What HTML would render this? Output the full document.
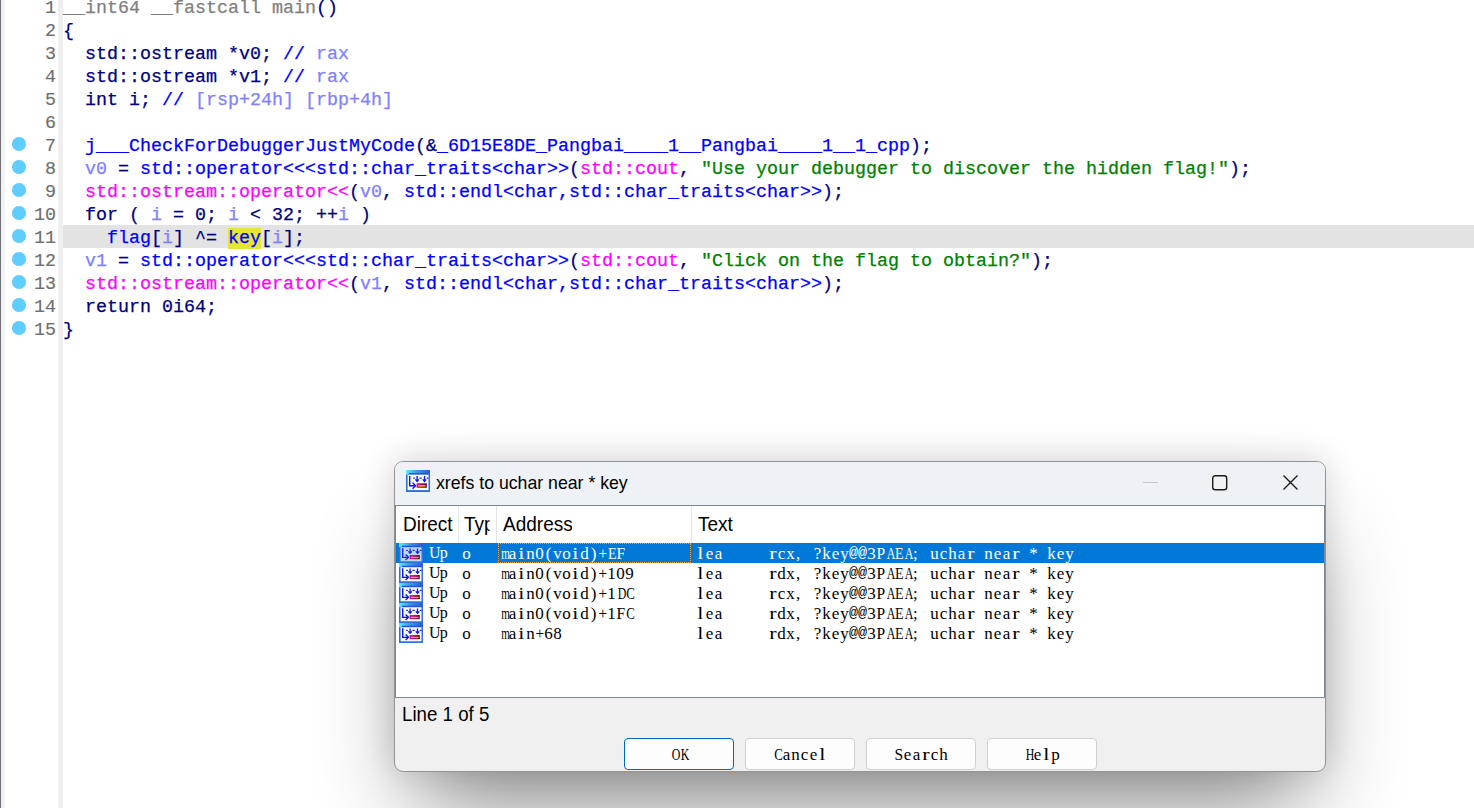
<!DOCTYPE html>
<html><head><meta charset="utf-8">
<style>
*{margin:0;padding:0;box-sizing:border-box}
html,body{width:1474px;height:808px;overflow:hidden;background:#fff;position:relative}
.abs{position:absolute}
.lb{position:absolute;left:0;top:0;width:1px;height:808px;background:#6e7278}
.lb2{position:absolute;left:1px;top:0;width:4px;height:808px;background:#f3f3f3}
.gut{position:absolute;left:58px;top:0;width:5px;height:808px;background:#efefef}
.ln{position:absolute;left:0;width:56px;text-align:right;font-family:"Liberation Mono",monospace;font-size:18.333px;line-height:23px;color:#6e6e6e;white-space:pre;-webkit-text-stroke:0.15px currentColor}
.cl{position:absolute;left:63px;font-family:"Liberation Mono",monospace;font-size:18.333px;line-height:23px;color:#000080;white-space:pre;-webkit-text-stroke:0.25px currentColor}
.dot{position:absolute;left:12.3px;width:13.6px;height:13.6px;border-radius:50%;background:#5fcdfd}
.hl{position:absolute;left:63px;top:225px;width:1411px;height:23px;background:#e3e3e3}
.n{color:#000080} .b{color:#0000ff} .p{color:#8080ff} .m{color:#ff00ff} .s{color:#008000} .gr{color:#808080}
.k{color:#0000ff;background:#e5e536}
.dlg{position:absolute;left:394px;top:461px;width:932px;height:311px;border:1px solid #939393;border-radius:9px;background:#f0f0f0;box-shadow:0 -4px 32px rgba(0,0,0,0.14),0 56px 96px -22px rgba(0,0,0,0.46)}
.title{position:absolute;left:395px;top:462px;width:930px;height:43px;background:#eef2f6;border-radius:8px 8px 0 0}
.ttxt{position:absolute;left:436px;top:472px;font-family:"Liberation Sans",sans-serif;font-size:17.7px;line-height:22px;color:#000;white-space:pre}
.list{position:absolute;left:395px;top:505px;width:930px;height:193px;background:#fff;border:1px solid #80868e}
.hdr{position:absolute;top:513px;font-family:"Liberation Sans",sans-serif;font-size:20px;line-height:22px;transform:scaleX(0.95);transform-origin:0 0;color:#000;white-space:nowrap;overflow:hidden}
.sep{position:absolute;top:506px;width:1px;height:37px;background:#e5e5e5}
.rt{position:absolute;font-family:"Liberation Serif",serif;font-size:17px;line-height:21px;color:#000;white-space:nowrap}
.rt i,.btn i{display:inline-block;font-style:normal;text-align:center;vertical-align:top}
.rt b,.btn b{display:inline-block;font-weight:normal}
.status{position:absolute;left:402px;top:703px;font-family:"Liberation Sans",sans-serif;font-size:20px;transform:scaleX(0.935);transform-origin:0 0;line-height:22px;color:#000;white-space:pre}
.btn{position:absolute;top:738px;width:110px;height:32px;border:1px solid #d0d0d0;border-radius:4px;background:#fdfdfd;font-family:"Liberation Serif",serif;font-size:17px;line-height:31px;text-align:center;color:#000;white-space:nowrap}
.btn.def{border:1.5px solid #0067c0}
</style></head><body>
<div class="lb"></div><div class="lb2"></div><div class="gut"></div>
<div class="hl"></div>
<div class="ln" style="top:-3px">1</div>
<div class="cl" style="top:-3px"><span class="gr">__int64 __fastcall main</span><span class="n">()</span></div>
<div class="ln" style="top:20px">2</div>
<div class="cl" style="top:20px"><span class="n">{</span></div>
<div class="ln" style="top:43px">3</div>
<div class="cl" style="top:43px"><span class="n">  std::ostream *v0; </span><span class="b">//</span><span class="p"> rax</span></div>
<div class="ln" style="top:66px">4</div>
<div class="cl" style="top:66px"><span class="n">  std::ostream *v1; </span><span class="b">//</span><span class="p"> rax</span></div>
<div class="ln" style="top:89px">5</div>
<div class="cl" style="top:89px"><span class="n">  int i; </span><span class="b">//</span><span class="p"> [rsp+24h] [rbp+4h]</span></div>
<div class="ln" style="top:112px">6</div>
<div class="cl" style="top:112px"></div>
<div class="ln" style="top:135px">7</div>
<div class="dot" style="top:137px"></div>
<div class="cl" style="top:135px"><span class="n">  </span><span class="b">j___CheckForDebuggerJustMyCode</span><span class="n">(&amp;</span><span class="b">_6D15E8DE_Pangbai____1__Pangbai____1__1_cpp</span><span class="n">);</span></div>
<div class="ln" style="top:158px">8</div>
<div class="dot" style="top:160px"></div>
<div class="cl" style="top:158px"><span class="n">  </span><span class="p">v0</span><span class="n"> = </span><span class="b">std::operator&lt;&lt;&lt;std::char_traits&lt;char&gt;&gt;</span><span class="n">(</span><span class="m">std::cout</span><span class="n">, </span><span class="s">"Use your debugger to discover the hidden flag!"</span><span class="n">);</span></div>
<div class="ln" style="top:181px">9</div>
<div class="dot" style="top:183px"></div>
<div class="cl" style="top:181px"><span class="n">  </span><span class="m">std::ostream::operator&lt;&lt;</span><span class="n">(</span><span class="p">v0</span><span class="n">, </span><span class="b">std::endl&lt;char,std::char_traits&lt;char&gt;&gt;</span><span class="n">);</span></div>
<div class="ln" style="top:204px">10</div>
<div class="dot" style="top:206px"></div>
<div class="cl" style="top:204px"><span class="n">  for ( </span><span class="p">i</span><span class="n"> = 0; </span><span class="p">i</span><span class="n"> &lt; 32; ++</span><span class="p">i</span><span class="n"> )</span></div>
<div class="ln" style="top:227px">11</div>
<div class="dot" style="top:229px"></div>
<div class="cl" style="top:227px"><span class="n">    </span><span class="b">flag</span><span class="n">[</span><span class="p">i</span><span class="n">] ^= </span><span class="k">key</span><span class="n">[</span><span class="p">i</span><span class="n">];</span></div>
<div class="ln" style="top:250px">12</div>
<div class="dot" style="top:252px"></div>
<div class="cl" style="top:250px"><span class="n">  </span><span class="p">v1</span><span class="n"> = </span><span class="b">std::operator&lt;&lt;&lt;std::char_traits&lt;char&gt;&gt;</span><span class="n">(</span><span class="m">std::cout</span><span class="n">, </span><span class="s">"Click on the flag to obtain?"</span><span class="n">);</span></div>
<div class="ln" style="top:273px">13</div>
<div class="dot" style="top:275px"></div>
<div class="cl" style="top:273px"><span class="n">  </span><span class="m">std::ostream::operator&lt;&lt;</span><span class="n">(</span><span class="p">v1</span><span class="n">, </span><span class="b">std::endl&lt;char,std::char_traits&lt;char&gt;&gt;</span><span class="n">);</span></div>
<div class="ln" style="top:296px">14</div>
<div class="dot" style="top:298px"></div>
<div class="cl" style="top:296px"><span class="n">  return 0i64;</span></div>
<div class="ln" style="top:319px">15</div>
<div class="dot" style="top:321px"></div>
<div class="cl" style="top:319px"><span class="n">}</span></div>
<div class="dlg"></div>
<div class="title"></div>
<svg class="abs" style="left:406px;top:470px" width="24" height="22" viewBox="0 0 24 22" preserveAspectRatio="none">
<defs><linearGradient id="tgt" x1="0" y1="0" x2="1" y2="0"><stop offset="0" stop-color="#5aeeff"/><stop offset="0.45" stop-color="#3a98ea"/><stop offset="1" stop-color="#2a5cd0"/></linearGradient>
<linearGradient id="rgt" x1="0" y1="0" x2="1" y2="0"><stop offset="0" stop-color="#e0108c"/><stop offset="0.5" stop-color="#980a6a"/><stop offset="1" stop-color="#4a0038"/></linearGradient></defs>
<rect x="0" y="0" width="24" height="22" fill="#2f70da"/>
<rect x="0" y="0" width="24" height="4.7" fill="url(#tgt)"/>
<rect x="2.8" y="3" width="19.5" height="1.7" fill="#2456d4"/>
<rect x="1.6" y="4.7" width="20.9" height="15.4" fill="#f4fdff"/>
<path d="M3.7 5.9 V15.7 H9.6" stroke="#1010ff" stroke-width="1.4" fill="none"/>
<path d="M6.6 12.6 L9.4 15.7 L6.6 18.8" stroke="#1010ff" stroke-width="1.4" fill="none"/>
<path d="M7.2 8.1 H8.8 M13.6 8.1 H15.7 M20.8 8.1 H22.5" stroke="#1010ff" stroke-width="1.4" fill="none"/>
<path d="M11.1 6 V11.4 M9.4 9.3 L11.1 11.4 L12.8 9.3 M18.5 6 V11.4 M16.8 9.3 L18.5 11.4 L20.2 9.3" stroke="#1010ff" stroke-width="1.3" fill="none"/>
<rect x="10.6" y="13.3" width="10.2" height="4.5" fill="url(#rgt)"/>
<rect x="12" y="15.1" width="7.6" height="1.5" fill="#ffa22a"/>
</svg>
<div class="ttxt">xrefs to uchar near * key</div>
<svg class="abs" style="left:1140px;top:474px" width="170" height="20" viewBox="0 0 170 20">
 <path d="M3 8.5 H18" stroke="#c5c5c5" stroke-width="1"/>
 <rect x="72.7" y="1.7" width="14" height="14" rx="2.5" fill="none" stroke="#1a1a1a" stroke-width="1.4"/>
 <path d="M143.5 1.5 L157.5 15.5 M157.5 1.5 L143.5 15.5" stroke="#1a1a1a" stroke-width="1.4"/>
</svg>
<div class="list"></div>
<div class="hdr" style="left:403px;width:54px">Direct</div>
<div class="sep" style="left:458px"></div>
<div class="hdr" style="left:464px;width:27px">Type</div>
<div class="sep" style="left:496px"></div>
<div class="hdr" style="left:503px">Address</div>
<div class="sep" style="left:691px"></div>
<div class="hdr" style="left:698px">Text</div>
<div class="abs" style="left:396px;top:543px;width:928px;height:20px;background:#0078d7"></div>
<div class="abs" style="left:498px;top:543px;width:193px;height:20px;border:1px dotted #f0a040"></div>
<svg class="abs" style="left:399px;top:543px" width="24" height="20" viewBox="0 0 24 22" preserveAspectRatio="none">
<defs><linearGradient id="tgr0" x1="0" y1="0" x2="1" y2="0"><stop offset="0" stop-color="#5aeeff"/><stop offset="0.45" stop-color="#3a98ea"/><stop offset="1" stop-color="#2a5cd0"/></linearGradient>
<linearGradient id="rgr0" x1="0" y1="0" x2="1" y2="0"><stop offset="0" stop-color="#e0108c"/><stop offset="0.5" stop-color="#980a6a"/><stop offset="1" stop-color="#4a0038"/></linearGradient></defs>
<rect x="0" y="0" width="24" height="22" fill="#2f70da"/>
<rect x="0" y="0" width="24" height="4.7" fill="url(#tgr0)"/>
<rect x="2.8" y="3" width="19.5" height="1.7" fill="#2456d4"/>
<rect x="1.6" y="4.7" width="20.9" height="15.4" fill="#b6daf2"/>
<path d="M3.7 5.9 V15.7 H9.6" stroke="#1f1ff5" stroke-width="1.4" fill="none"/>
<path d="M6.6 12.6 L9.4 15.7 L6.6 18.8" stroke="#1f1ff5" stroke-width="1.4" fill="none"/>
<path d="M7.2 8.1 H8.8 M13.6 8.1 H15.7 M20.8 8.1 H22.5" stroke="#1f1ff5" stroke-width="1.4" fill="none"/>
<path d="M11.1 6 V11.4 M9.4 9.3 L11.1 11.4 L12.8 9.3 M18.5 6 V11.4 M16.8 9.3 L18.5 11.4 L20.2 9.3" stroke="#1f1ff5" stroke-width="1.3" fill="none"/>
<rect x="10.6" y="13.3" width="10.2" height="4.5" fill="url(#rgr0)"/>
<rect x="12" y="15.1" width="7.6" height="1.5" fill="#d8a050"/>
</svg>
<div class="rt" style="left:429px;top:543px;color:#fff;font-size:16px;letter-spacing:-0.8px;margin-top:-1px">Up</div>
<div class="rt" style="left:462px;top:543px;color:#fff;"><i style="width:9px">o</i></div>
<div class="rt" style="left:499px;top:543px;color:#fff;"><i style="width:9px"><b style="transform:scaleX(0.650)">m</b></i><i style="width:9px">a</i><i style="width:9px"><b style="transform:scaleX(1.300)">i</b></i><i style="width:9px">n</i><i style="width:9px">0</i><i style="width:9px">(</i><i style="width:9px">v</i><i style="width:9px">o</i><i style="width:9px"><b style="transform:scaleX(1.300)">i</b></i><i style="width:9px">d</i><i style="width:9px">)</i><i style="width:9px"><b style="transform:scaleX(0.897)">+</b></i><i style="width:9px"><b style="transform:scaleX(0.828)">E</b></i><i style="width:9px"><b style="transform:scaleX(0.910)">F</b></i></div>
<div class="rt" style="left:696px;top:543px;color:#fff;"><i style="width:9px"><b style="transform:scaleX(1.300)">l</b></i><i style="width:9px">e</i><i style="width:9px">a</i><i style="width:9px"></i><i style="width:9px"></i><i style="width:9px"></i><i style="width:9px"></i><i style="width:9px"></i><i style="width:9px"><b style="transform:scaleX(1.300)">r</b></i><i style="width:9px">c</i><i style="width:9px">x</i><i style="width:9px;text-align:left;padding-left:1px">,</i><i style="width:9px"></i><i style="width:9px">?</i><i style="width:9px">k</i><i style="width:9px">e</i><i style="width:9px">y</i><i style="width:9px;font-family:&quot;Liberation Mono&quot;,monospace;font-size:15px">@</i><i style="width:9px;font-family:&quot;Liberation Mono&quot;,monospace;font-size:15px">@</i><i style="width:9px">3</i><i style="width:9px"><b style="transform:scaleX(0.910)">P</b></i><i style="width:9px"><b style="transform:scaleX(0.701)">A</b></i><i style="width:9px"><b style="transform:scaleX(0.828)">E</b></i><i style="width:9px"><b style="transform:scaleX(0.701)">A</b></i><i style="width:9px;text-align:left;padding-left:1px">;</i><i style="width:9px"></i><i style="width:9px">u</i><i style="width:9px">c</i><i style="width:9px">h</i><i style="width:9px">a</i><i style="width:9px"><b style="transform:scaleX(1.300)">r</b></i><i style="width:9px"></i><i style="width:9px">n</i><i style="width:9px">e</i><i style="width:9px">a</i><i style="width:9px"><b style="transform:scaleX(1.300)">r</b></i><i style="width:9px"></i><i style="width:9px">*</i><i style="width:9px"></i><i style="width:9px">k</i><i style="width:9px">e</i><i style="width:9px">y</i></div>
<svg class="abs" style="left:399px;top:563px" width="24" height="20" viewBox="0 0 24 22" preserveAspectRatio="none">
<defs><linearGradient id="tgr1" x1="0" y1="0" x2="1" y2="0"><stop offset="0" stop-color="#5aeeff"/><stop offset="0.45" stop-color="#3a98ea"/><stop offset="1" stop-color="#2a5cd0"/></linearGradient>
<linearGradient id="rgr1" x1="0" y1="0" x2="1" y2="0"><stop offset="0" stop-color="#e0108c"/><stop offset="0.5" stop-color="#980a6a"/><stop offset="1" stop-color="#4a0038"/></linearGradient></defs>
<rect x="0" y="0" width="24" height="22" fill="#2f70da"/>
<rect x="0" y="0" width="24" height="4.7" fill="url(#tgr1)"/>
<rect x="2.8" y="3" width="19.5" height="1.7" fill="#2456d4"/>
<rect x="1.6" y="4.7" width="20.9" height="15.4" fill="#f4fdff"/>
<path d="M3.7 5.9 V15.7 H9.6" stroke="#1010ff" stroke-width="1.4" fill="none"/>
<path d="M6.6 12.6 L9.4 15.7 L6.6 18.8" stroke="#1010ff" stroke-width="1.4" fill="none"/>
<path d="M7.2 8.1 H8.8 M13.6 8.1 H15.7 M20.8 8.1 H22.5" stroke="#1010ff" stroke-width="1.4" fill="none"/>
<path d="M11.1 6 V11.4 M9.4 9.3 L11.1 11.4 L12.8 9.3 M18.5 6 V11.4 M16.8 9.3 L18.5 11.4 L20.2 9.3" stroke="#1010ff" stroke-width="1.3" fill="none"/>
<rect x="10.6" y="13.3" width="10.2" height="4.5" fill="url(#rgr1)"/>
<rect x="12" y="15.1" width="7.6" height="1.5" fill="#ffa22a"/>
</svg>
<div class="rt" style="left:429px;top:563px;font-size:16px;letter-spacing:-0.8px;margin-top:-1px">Up</div>
<div class="rt" style="left:462px;top:563px;"><i style="width:9px">o</i></div>
<div class="rt" style="left:499px;top:563px;"><i style="width:9px"><b style="transform:scaleX(0.650)">m</b></i><i style="width:9px">a</i><i style="width:9px"><b style="transform:scaleX(1.300)">i</b></i><i style="width:9px">n</i><i style="width:9px">0</i><i style="width:9px">(</i><i style="width:9px">v</i><i style="width:9px">o</i><i style="width:9px"><b style="transform:scaleX(1.300)">i</b></i><i style="width:9px">d</i><i style="width:9px">)</i><i style="width:9px"><b style="transform:scaleX(0.897)">+</b></i><i style="width:9px">1</i><i style="width:9px">0</i><i style="width:9px">9</i></div>
<div class="rt" style="left:696px;top:563px;"><i style="width:9px"><b style="transform:scaleX(1.300)">l</b></i><i style="width:9px">e</i><i style="width:9px">a</i><i style="width:9px"></i><i style="width:9px"></i><i style="width:9px"></i><i style="width:9px"></i><i style="width:9px"></i><i style="width:9px"><b style="transform:scaleX(1.300)">r</b></i><i style="width:9px">d</i><i style="width:9px">x</i><i style="width:9px;text-align:left;padding-left:1px">,</i><i style="width:9px"></i><i style="width:9px">?</i><i style="width:9px">k</i><i style="width:9px">e</i><i style="width:9px">y</i><i style="width:9px;font-family:&quot;Liberation Mono&quot;,monospace;font-size:15px">@</i><i style="width:9px;font-family:&quot;Liberation Mono&quot;,monospace;font-size:15px">@</i><i style="width:9px">3</i><i style="width:9px"><b style="transform:scaleX(0.910)">P</b></i><i style="width:9px"><b style="transform:scaleX(0.701)">A</b></i><i style="width:9px"><b style="transform:scaleX(0.828)">E</b></i><i style="width:9px"><b style="transform:scaleX(0.701)">A</b></i><i style="width:9px;text-align:left;padding-left:1px">;</i><i style="width:9px"></i><i style="width:9px">u</i><i style="width:9px">c</i><i style="width:9px">h</i><i style="width:9px">a</i><i style="width:9px"><b style="transform:scaleX(1.300)">r</b></i><i style="width:9px"></i><i style="width:9px">n</i><i style="width:9px">e</i><i style="width:9px">a</i><i style="width:9px"><b style="transform:scaleX(1.300)">r</b></i><i style="width:9px"></i><i style="width:9px">*</i><i style="width:9px"></i><i style="width:9px">k</i><i style="width:9px">e</i><i style="width:9px">y</i></div>
<svg class="abs" style="left:399px;top:583px" width="24" height="20" viewBox="0 0 24 22" preserveAspectRatio="none">
<defs><linearGradient id="tgr2" x1="0" y1="0" x2="1" y2="0"><stop offset="0" stop-color="#5aeeff"/><stop offset="0.45" stop-color="#3a98ea"/><stop offset="1" stop-color="#2a5cd0"/></linearGradient>
<linearGradient id="rgr2" x1="0" y1="0" x2="1" y2="0"><stop offset="0" stop-color="#e0108c"/><stop offset="0.5" stop-color="#980a6a"/><stop offset="1" stop-color="#4a0038"/></linearGradient></defs>
<rect x="0" y="0" width="24" height="22" fill="#2f70da"/>
<rect x="0" y="0" width="24" height="4.7" fill="url(#tgr2)"/>
<rect x="2.8" y="3" width="19.5" height="1.7" fill="#2456d4"/>
<rect x="1.6" y="4.7" width="20.9" height="15.4" fill="#f4fdff"/>
<path d="M3.7 5.9 V15.7 H9.6" stroke="#1010ff" stroke-width="1.4" fill="none"/>
<path d="M6.6 12.6 L9.4 15.7 L6.6 18.8" stroke="#1010ff" stroke-width="1.4" fill="none"/>
<path d="M7.2 8.1 H8.8 M13.6 8.1 H15.7 M20.8 8.1 H22.5" stroke="#1010ff" stroke-width="1.4" fill="none"/>
<path d="M11.1 6 V11.4 M9.4 9.3 L11.1 11.4 L12.8 9.3 M18.5 6 V11.4 M16.8 9.3 L18.5 11.4 L20.2 9.3" stroke="#1010ff" stroke-width="1.3" fill="none"/>
<rect x="10.6" y="13.3" width="10.2" height="4.5" fill="url(#rgr2)"/>
<rect x="12" y="15.1" width="7.6" height="1.5" fill="#ffa22a"/>
</svg>
<div class="rt" style="left:429px;top:583px;font-size:16px;letter-spacing:-0.8px;margin-top:-1px">Up</div>
<div class="rt" style="left:462px;top:583px;"><i style="width:9px">o</i></div>
<div class="rt" style="left:499px;top:583px;"><i style="width:9px"><b style="transform:scaleX(0.650)">m</b></i><i style="width:9px">a</i><i style="width:9px"><b style="transform:scaleX(1.300)">i</b></i><i style="width:9px">n</i><i style="width:9px">0</i><i style="width:9px">(</i><i style="width:9px">v</i><i style="width:9px">o</i><i style="width:9px"><b style="transform:scaleX(1.300)">i</b></i><i style="width:9px">d</i><i style="width:9px">)</i><i style="width:9px"><b style="transform:scaleX(0.897)">+</b></i><i style="width:9px">1</i><i style="width:9px"><b style="transform:scaleX(0.701)">D</b></i><i style="width:9px"><b style="transform:scaleX(0.758)">C</b></i></div>
<div class="rt" style="left:696px;top:583px;"><i style="width:9px"><b style="transform:scaleX(1.300)">l</b></i><i style="width:9px">e</i><i style="width:9px">a</i><i style="width:9px"></i><i style="width:9px"></i><i style="width:9px"></i><i style="width:9px"></i><i style="width:9px"></i><i style="width:9px"><b style="transform:scaleX(1.300)">r</b></i><i style="width:9px">c</i><i style="width:9px">x</i><i style="width:9px;text-align:left;padding-left:1px">,</i><i style="width:9px"></i><i style="width:9px">?</i><i style="width:9px">k</i><i style="width:9px">e</i><i style="width:9px">y</i><i style="width:9px;font-family:&quot;Liberation Mono&quot;,monospace;font-size:15px">@</i><i style="width:9px;font-family:&quot;Liberation Mono&quot;,monospace;font-size:15px">@</i><i style="width:9px">3</i><i style="width:9px"><b style="transform:scaleX(0.910)">P</b></i><i style="width:9px"><b style="transform:scaleX(0.701)">A</b></i><i style="width:9px"><b style="transform:scaleX(0.828)">E</b></i><i style="width:9px"><b style="transform:scaleX(0.701)">A</b></i><i style="width:9px;text-align:left;padding-left:1px">;</i><i style="width:9px"></i><i style="width:9px">u</i><i style="width:9px">c</i><i style="width:9px">h</i><i style="width:9px">a</i><i style="width:9px"><b style="transform:scaleX(1.300)">r</b></i><i style="width:9px"></i><i style="width:9px">n</i><i style="width:9px">e</i><i style="width:9px">a</i><i style="width:9px"><b style="transform:scaleX(1.300)">r</b></i><i style="width:9px"></i><i style="width:9px">*</i><i style="width:9px"></i><i style="width:9px">k</i><i style="width:9px">e</i><i style="width:9px">y</i></div>
<svg class="abs" style="left:399px;top:603px" width="24" height="20" viewBox="0 0 24 22" preserveAspectRatio="none">
<defs><linearGradient id="tgr3" x1="0" y1="0" x2="1" y2="0"><stop offset="0" stop-color="#5aeeff"/><stop offset="0.45" stop-color="#3a98ea"/><stop offset="1" stop-color="#2a5cd0"/></linearGradient>
<linearGradient id="rgr3" x1="0" y1="0" x2="1" y2="0"><stop offset="0" stop-color="#e0108c"/><stop offset="0.5" stop-color="#980a6a"/><stop offset="1" stop-color="#4a0038"/></linearGradient></defs>
<rect x="0" y="0" width="24" height="22" fill="#2f70da"/>
<rect x="0" y="0" width="24" height="4.7" fill="url(#tgr3)"/>
<rect x="2.8" y="3" width="19.5" height="1.7" fill="#2456d4"/>
<rect x="1.6" y="4.7" width="20.9" height="15.4" fill="#f4fdff"/>
<path d="M3.7 5.9 V15.7 H9.6" stroke="#1010ff" stroke-width="1.4" fill="none"/>
<path d="M6.6 12.6 L9.4 15.7 L6.6 18.8" stroke="#1010ff" stroke-width="1.4" fill="none"/>
<path d="M7.2 8.1 H8.8 M13.6 8.1 H15.7 M20.8 8.1 H22.5" stroke="#1010ff" stroke-width="1.4" fill="none"/>
<path d="M11.1 6 V11.4 M9.4 9.3 L11.1 11.4 L12.8 9.3 M18.5 6 V11.4 M16.8 9.3 L18.5 11.4 L20.2 9.3" stroke="#1010ff" stroke-width="1.3" fill="none"/>
<rect x="10.6" y="13.3" width="10.2" height="4.5" fill="url(#rgr3)"/>
<rect x="12" y="15.1" width="7.6" height="1.5" fill="#ffa22a"/>
</svg>
<div class="rt" style="left:429px;top:603px;font-size:16px;letter-spacing:-0.8px;margin-top:-1px">Up</div>
<div class="rt" style="left:462px;top:603px;"><i style="width:9px">o</i></div>
<div class="rt" style="left:499px;top:603px;"><i style="width:9px"><b style="transform:scaleX(0.650)">m</b></i><i style="width:9px">a</i><i style="width:9px"><b style="transform:scaleX(1.300)">i</b></i><i style="width:9px">n</i><i style="width:9px">0</i><i style="width:9px">(</i><i style="width:9px">v</i><i style="width:9px">o</i><i style="width:9px"><b style="transform:scaleX(1.300)">i</b></i><i style="width:9px">d</i><i style="width:9px">)</i><i style="width:9px"><b style="transform:scaleX(0.897)">+</b></i><i style="width:9px">1</i><i style="width:9px"><b style="transform:scaleX(0.910)">F</b></i><i style="width:9px"><b style="transform:scaleX(0.758)">C</b></i></div>
<div class="rt" style="left:696px;top:603px;"><i style="width:9px"><b style="transform:scaleX(1.300)">l</b></i><i style="width:9px">e</i><i style="width:9px">a</i><i style="width:9px"></i><i style="width:9px"></i><i style="width:9px"></i><i style="width:9px"></i><i style="width:9px"></i><i style="width:9px"><b style="transform:scaleX(1.300)">r</b></i><i style="width:9px">d</i><i style="width:9px">x</i><i style="width:9px;text-align:left;padding-left:1px">,</i><i style="width:9px"></i><i style="width:9px">?</i><i style="width:9px">k</i><i style="width:9px">e</i><i style="width:9px">y</i><i style="width:9px;font-family:&quot;Liberation Mono&quot;,monospace;font-size:15px">@</i><i style="width:9px;font-family:&quot;Liberation Mono&quot;,monospace;font-size:15px">@</i><i style="width:9px">3</i><i style="width:9px"><b style="transform:scaleX(0.910)">P</b></i><i style="width:9px"><b style="transform:scaleX(0.701)">A</b></i><i style="width:9px"><b style="transform:scaleX(0.828)">E</b></i><i style="width:9px"><b style="transform:scaleX(0.701)">A</b></i><i style="width:9px;text-align:left;padding-left:1px">;</i><i style="width:9px"></i><i style="width:9px">u</i><i style="width:9px">c</i><i style="width:9px">h</i><i style="width:9px">a</i><i style="width:9px"><b style="transform:scaleX(1.300)">r</b></i><i style="width:9px"></i><i style="width:9px">n</i><i style="width:9px">e</i><i style="width:9px">a</i><i style="width:9px"><b style="transform:scaleX(1.300)">r</b></i><i style="width:9px"></i><i style="width:9px">*</i><i style="width:9px"></i><i style="width:9px">k</i><i style="width:9px">e</i><i style="width:9px">y</i></div>
<svg class="abs" style="left:399px;top:623px" width="24" height="20" viewBox="0 0 24 22" preserveAspectRatio="none">
<defs><linearGradient id="tgr4" x1="0" y1="0" x2="1" y2="0"><stop offset="0" stop-color="#5aeeff"/><stop offset="0.45" stop-color="#3a98ea"/><stop offset="1" stop-color="#2a5cd0"/></linearGradient>
<linearGradient id="rgr4" x1="0" y1="0" x2="1" y2="0"><stop offset="0" stop-color="#e0108c"/><stop offset="0.5" stop-color="#980a6a"/><stop offset="1" stop-color="#4a0038"/></linearGradient></defs>
<rect x="0" y="0" width="24" height="22" fill="#2f70da"/>
<rect x="0" y="0" width="24" height="4.7" fill="url(#tgr4)"/>
<rect x="2.8" y="3" width="19.5" height="1.7" fill="#2456d4"/>
<rect x="1.6" y="4.7" width="20.9" height="15.4" fill="#f4fdff"/>
<path d="M3.7 5.9 V15.7 H9.6" stroke="#1010ff" stroke-width="1.4" fill="none"/>
<path d="M6.6 12.6 L9.4 15.7 L6.6 18.8" stroke="#1010ff" stroke-width="1.4" fill="none"/>
<path d="M7.2 8.1 H8.8 M13.6 8.1 H15.7 M20.8 8.1 H22.5" stroke="#1010ff" stroke-width="1.4" fill="none"/>
<path d="M11.1 6 V11.4 M9.4 9.3 L11.1 11.4 L12.8 9.3 M18.5 6 V11.4 M16.8 9.3 L18.5 11.4 L20.2 9.3" stroke="#1010ff" stroke-width="1.3" fill="none"/>
<rect x="10.6" y="13.3" width="10.2" height="4.5" fill="url(#rgr4)"/>
<rect x="12" y="15.1" width="7.6" height="1.5" fill="#ffa22a"/>
</svg>
<div class="rt" style="left:429px;top:623px;font-size:16px;letter-spacing:-0.8px;margin-top:-1px">Up</div>
<div class="rt" style="left:462px;top:623px;"><i style="width:9px">o</i></div>
<div class="rt" style="left:499px;top:623px;"><i style="width:9px"><b style="transform:scaleX(0.650)">m</b></i><i style="width:9px">a</i><i style="width:9px"><b style="transform:scaleX(1.300)">i</b></i><i style="width:9px">n</i><i style="width:9px"><b style="transform:scaleX(0.897)">+</b></i><i style="width:9px">6</i><i style="width:9px">8</i></div>
<div class="rt" style="left:696px;top:623px;"><i style="width:9px"><b style="transform:scaleX(1.300)">l</b></i><i style="width:9px">e</i><i style="width:9px">a</i><i style="width:9px"></i><i style="width:9px"></i><i style="width:9px"></i><i style="width:9px"></i><i style="width:9px"></i><i style="width:9px"><b style="transform:scaleX(1.300)">r</b></i><i style="width:9px">d</i><i style="width:9px">x</i><i style="width:9px;text-align:left;padding-left:1px">,</i><i style="width:9px"></i><i style="width:9px">?</i><i style="width:9px">k</i><i style="width:9px">e</i><i style="width:9px">y</i><i style="width:9px;font-family:&quot;Liberation Mono&quot;,monospace;font-size:15px">@</i><i style="width:9px;font-family:&quot;Liberation Mono&quot;,monospace;font-size:15px">@</i><i style="width:9px">3</i><i style="width:9px"><b style="transform:scaleX(0.910)">P</b></i><i style="width:9px"><b style="transform:scaleX(0.701)">A</b></i><i style="width:9px"><b style="transform:scaleX(0.828)">E</b></i><i style="width:9px"><b style="transform:scaleX(0.701)">A</b></i><i style="width:9px;text-align:left;padding-left:1px">;</i><i style="width:9px"></i><i style="width:9px">u</i><i style="width:9px">c</i><i style="width:9px">h</i><i style="width:9px">a</i><i style="width:9px"><b style="transform:scaleX(1.300)">r</b></i><i style="width:9px"></i><i style="width:9px">n</i><i style="width:9px">e</i><i style="width:9px">a</i><i style="width:9px"><b style="transform:scaleX(1.300)">r</b></i><i style="width:9px"></i><i style="width:9px">*</i><i style="width:9px"></i><i style="width:9px">k</i><i style="width:9px">e</i><i style="width:9px">y</i></div>
<div class="status">Line 1 of 5</div>
<div class="btn def" style="left:624px"><i style="width:9px"><b style="transform:scaleX(0.701)">O</b></i><i style="width:9px"><b style="transform:scaleX(0.701)">K</b></i></div>
<div class="btn" style="left:745px"><i style="width:9px"><b style="transform:scaleX(0.758)">C</b></i><i style="width:9px">a</i><i style="width:9px">n</i><i style="width:9px">c</i><i style="width:9px">e</i><i style="width:9px"><b style="transform:scaleX(1.300)">l</b></i></div>
<div class="btn" style="left:866px"><i style="width:9px"><b style="transform:scaleX(0.910)">S</b></i><i style="width:9px">e</i><i style="width:9px">a</i><i style="width:9px"><b style="transform:scaleX(1.300)">r</b></i><i style="width:9px">c</i><i style="width:9px">h</i></div>
<div class="btn" style="left:987px"><i style="width:9px"><b style="transform:scaleX(0.701)">H</b></i><i style="width:9px">e</i><i style="width:9px"><b style="transform:scaleX(1.300)">l</b></i><i style="width:9px">p</i></div>
</body></html>
